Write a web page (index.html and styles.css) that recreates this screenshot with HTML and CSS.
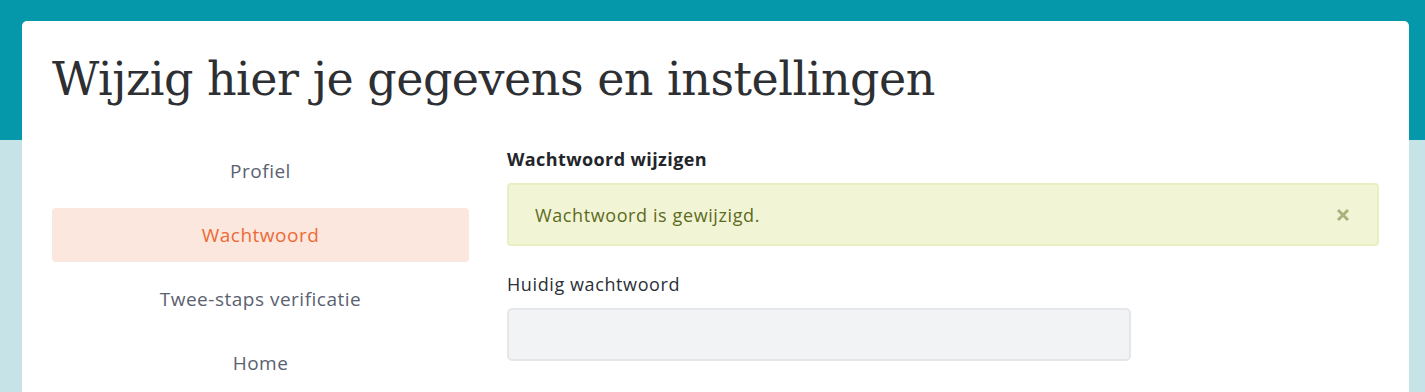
FILE: index.html
```html
<!DOCTYPE html>
<html lang="nl">
<head>
    <meta charset="UTF-8">
    <meta name="viewport" content="width=device-width, initial-scale=1.0">
    <title>Instellingen</title>
    <link rel="stylesheet" href="styles.css">
</head>
<body>
    <div class="top-band"></div>

    <div class="card">
        <h1 class="page-title">Wijzig hier je gegevens en instellingen</h1>

        <div class="settings">
            <nav class="side-nav">
                <a href="#" class="nav-item">Profiel</a>
                <a href="#" class="nav-item active">Wachtwoord</a>
                <a href="#" class="nav-item">Twee-staps verificatie</a>
                <a href="#" class="nav-item">Home</a>
            </nav>

            <div class="content">
                <h2 class="section-title">Wachtwoord wijzigen</h2>

                <div class="alert">
                    <span>Wachtwoord is gewijzigd.</span>
                    <button class="alert-close" aria-label="Sluiten">
                        <svg width="14" height="14" viewBox="0 0 14 14">
                            <path d="M2 2 L12 12 M12 2 L2 12" stroke="currentColor" stroke-width="3"/>
                        </svg>
                    </button>
                </div>

                <div class="field">
                    <label for="current">Huidig wachtwoord</label>
                    <input type="password" id="current" class="input">
                </div>

                <div class="field">
                    <label for="new">Nieuw wachtwoord</label>
                    <input type="password" id="new" class="input">
                </div>
            </div>
        </div>
    </div>
</body>
</html>
```

FILE: styles.css
```css
body {
    margin: 0;
    background-color: #c6e4e7;
    font-family: "Open Sans", "Noto Sans", sans-serif;
    color: #2a2f38;
    overflow: hidden;
}

.top-band {
    height: 140px;
    background-color: #0598aa;
}

.card {
    margin: -119px 16px 0 22px; /* card sits over the teal band */
    background-color: #fff;
    border-radius: 5px;
    padding: 30px 30px 40px 30px;
}

.page-title {
    margin: 0;
    font-family: "DejaVu Serif", serif;
    font-weight: normal;
    font-size: 46px;
    line-height: 56px;
    color: #2d2f33;
    letter-spacing: -0.5px;
}

.settings {
    display: grid;
    grid-template-columns: 417px 1fr;
    gap: 38px;
    margin-top: 37px;
}

.side-nav {
    display: flex;
    flex-direction: column;
    gap: 10px;
}

.nav-item {
    display: block;
    height: 54px;
    line-height: 54px;
    text-align: center;
    font-size: 19px;
    letter-spacing: 0.5px;
    color: #5a6170;
    text-decoration: none;
    border-radius: 4px;
}

.nav-item.active {
    background-color: #fce7df;
    color: #ec6a34;
}

.section-title {
    margin: 3px 0 12px 0;
    font-size: 18px;
    font-weight: 700;
    letter-spacing: 0.4px;
    line-height: 24px;
    color: #222529;
}

.alert {
    display: flex;
    align-items: center;
    justify-content: space-between;
    height: 59px;
    padding: 0 26px;
    background-color: #f1f5d6;
    border: 2px solid #e8efc3;
    border-radius: 4px;
    color: #5e6a1e;
    font-size: 18px;
    letter-spacing: 0.6px;
}

.alert-close {
    border: none;
    background: none;
    padding: 0;
    margin-right: 1px;
    color: #a9b27c;
    cursor: pointer;
    display: flex;
}

.field {
    margin-top: 25px;
}

.field label {
    display: block;
    font-size: 18px;
    letter-spacing: 0.6px;
    line-height: 26px;
    margin-bottom: 11px;
    color: #2a2f38;
}

.input {
    display: block;
    box-sizing: border-box;
    width: 624px;
    height: 53px;
    background-color: #f2f3f5;
    border: 2px solid #e4e6ea;
    border-radius: 5px;
}
```
